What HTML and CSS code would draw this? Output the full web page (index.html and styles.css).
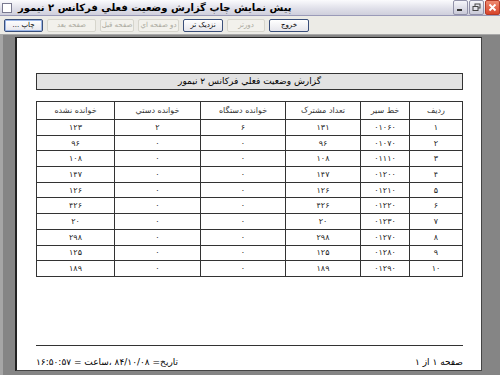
FILE: index.html
```html
<!DOCTYPE html>
<html lang="fa">
<head>
    <meta charset="UTF-8">
    <title>پیش نمایش چاپ</title>
    <link rel="stylesheet" href="styles.css">
</head>
<body>

<div class="window">
    <div class="titlebar">
        <div class="app-icon"></div>
        <div class="title">پیش نمایش چاپ گزارش وضعیت فعلي فرکانس ۲ نیمور</div>
        <div class="controls">
            <span class="ctl min"><svg width="13" height="13" viewBox="0 0 13 13"><rect x="3" y="8" width="5" height="2" fill="#333"/></svg></span>
            <span class="ctl max"><svg width="13" height="13" viewBox="0 0 13 13"><rect x="5" y="3" width="5" height="4" fill="none" stroke="#444"/><rect x="3" y="5.5" width="5" height="4" fill="#e4e4ec" stroke="#444"/></svg></span>
            <span class="ctl close"><svg width="13" height="13" viewBox="0 0 13 13"><path d="M3.5 3.5 L9.5 9.5 M9.5 3.5 L3.5 9.5" stroke="#fff" stroke-width="1.8"/></svg></span>
        </div>
    </div>

    <div class="toolbar">
        <button class="btn focus w39">چاپ ...</button>
        <button class="btn off w49">صفحه بعد</button>
        <button class="btn off w34">صفحه قبل</button>
        <button class="btn off w41">دو صفحه اي</button>
        <button class="btn w40">نزدیک تر</button>
        <button class="btn off w38">دورتر</button>
        <button class="btn w40">خروج</button>
    </div>

    <div class="viewer">
        <div class="page">
            <div class="report-title">گزارش وضعیت فعلي فرکانس ۲ نیمور</div>

            <table class="report" dir="rtl">
                <thead>
                    <tr>
                        <th class="c1">ردیف</th>
                        <th class="c2">خط سیر</th>
                        <th class="c3">تعداد مشترک</th>
                        <th class="c4">خوانده دستگاه</th>
                        <th class="c5">خوانده دستي</th>
                        <th class="c6">خوانده نشده</th>
                    </tr>
                </thead>
                <tbody>
                    <tr><td>۱</td><td>۰۱۰۶۰</td><td>۱۳۱</td><td>۶</td><td>۲</td><td>۱۲۳</td></tr>
                    <tr><td>۲</td><td>۰۱۰۷۰</td><td>۹۶</td><td>۰</td><td>۰</td><td>۹۶</td></tr>
                    <tr><td>۳</td><td>۰۱۱۱۰</td><td>۱۰۸</td><td>۰</td><td>۰</td><td>۱۰۸</td></tr>
                    <tr><td>۴</td><td>۰۱۲۰۰</td><td>۱۴۷</td><td>۰</td><td>۰</td><td>۱۴۷</td></tr>
                    <tr><td>۵</td><td>۰۱۲۱۰</td><td>۱۲۶</td><td>۰</td><td>۰</td><td>۱۲۶</td></tr>
                    <tr><td>۶</td><td>۰۱۲۲۰</td><td>۴۲۶</td><td>۰</td><td>۰</td><td>۴۲۶</td></tr>
                    <tr><td>۷</td><td>۰۱۲۳۰</td><td>۲۰</td><td>۰</td><td>۰</td><td>۲۰</td></tr>
                    <tr><td>۸</td><td>۰۱۲۷۰</td><td>۲۹۸</td><td>۰</td><td>۰</td><td>۲۹۸</td></tr>
                    <tr><td>۹</td><td>۰۱۲۸۰</td><td>۱۲۵</td><td>۰</td><td>۰</td><td>۱۲۵</td></tr>
                    <tr><td>۱۰</td><td>۰۱۲۹۰</td><td>۱۸۹</td><td>۰</td><td>۰</td><td>۱۸۹</td></tr>
                </tbody>
            </table>

            <div class="footer" dir="rtl">
                <span>صفحه ۱ از ۱</span>
                <span>تاریخ= ۸۴/۱۰/۰۸ ،ساعت = ۱۶:۵۰:۵۷</span>
            </div>
        </div>
    </div>
</div>

</body>
</html>
```

FILE: styles.css
```css
body {
    margin: 0;
    font-family: 'DejaVu Sans', 'Noto Sans', sans-serif;
    background-color: #808080;
}
.window {
    width: 500px;
    height: 375px;
    display: flex;
    flex-direction: column;
    overflow: hidden;
}
.titlebar {
    height: 15px;
    display: flex;
    align-items: center;
    background: linear-gradient(#fbfbfd, #dedee8 60%, #cfcfdc);
    border-bottom: 1px solid #9a9ab8;
}
.app-icon {
    width: 8px;
    height: 8px;
    margin: 0 6px 0 2px;
    border: 1px solid #7a7a90;
    background: #fff;
}
.title {
    flex: 1;
    font-size: 10px;
    font-weight: bold;
    color: #000;
    direction: rtl;
    text-align: left;
    white-space: nowrap;
}
.controls {
    display: flex;
    gap: 1px;
}
.ctl {
    width: 13px;
    height: 13px;
    border: 1px solid #9191a8;
    border-radius: 2px;
    background: linear-gradient(#f6f6fa, #c9c9d8);
    display: flex;
}
.ctl.close {
    background: linear-gradient(#ee8a70, #d8452b);
    border-color: #b43a26;
}
.toolbar {
    height: 18px;
    display: flex;
    align-items: center;
    gap: 4px;
    padding: 0 4px;
    background-color: #ecebe6;
    border-bottom: 1px solid #a8a8a8;
}
.btn {
    height: 13px;
    padding: 0;
    font-family: 'DejaVu Sans', sans-serif;
    font-size: 7px;
    color: #000;
    border: 1px solid #3a4f7a;
    border-radius: 2px;
    background: linear-gradient(#ffffff, #e6e6ec);
    direction: rtl;
    white-space: nowrap;
}
.btn.focus {
    box-shadow: inset 0 0 0 1px #9ab5e6;
}
.btn.off {
    color: #aaa99e;
    border-color: #d6d5cc;
    background: #f2f1ec;
}
.w34 { width: 34px; }
.w38 { width: 38px; }
.w39 { width: 39px; }
.w40 { width: 40px; }
.w41 { width: 41px; }
.w49 { width: 49px; }
.viewer {
    flex: 1;
    padding: 2px 18px 0 15px;
    background: linear-gradient(90deg, #a6a6a6 0, #a6a6a6 3px, #858585 3px);
}
.page {
    box-sizing: border-box;
    height: 334px;
    background: #fff;
    border-left: 2px solid #222;
    border-top: 1px solid #222;
    border-right: 1px solid #444;
    border-bottom: 1px solid #444;
    padding: 35px 18px 0 19px;
    display: flex;
    flex-direction: column;
}
.report-title {
    height: 15px;
    border: 1px solid #333;
    background: #e2e2e2;
    text-align: center;
    font-size: 9px;
    line-height: 15px;
    direction: rtl;
}
.report {
    margin-top: 11px;
    width: 100%;
    border-collapse: collapse;
    font-size: 8px;
    color: #222;
    table-layout: fixed;
}
.report th,
.report td {
    border: 1px solid #333;
    text-align: center;
    font-weight: normal;
    padding: 0;
}
.report th {
    height: 17px;
    color: #333;
}
.report td {
    height: 14.7px;
}
.c1 { width: 52px; }
.c2 { width: 48px; }
.c3 { width: 74px; }
.c4 { width: 84px; }
.c5 { width: 85px; }
.report .c6 { width: auto; }
.footer {
    margin-top: 68px;
    border-top: 1px solid #333;
    padding-top: 11px;
    display: flex;
    justify-content: space-between;
    font-size: 9px;
    line-height: 11px;
}
```
